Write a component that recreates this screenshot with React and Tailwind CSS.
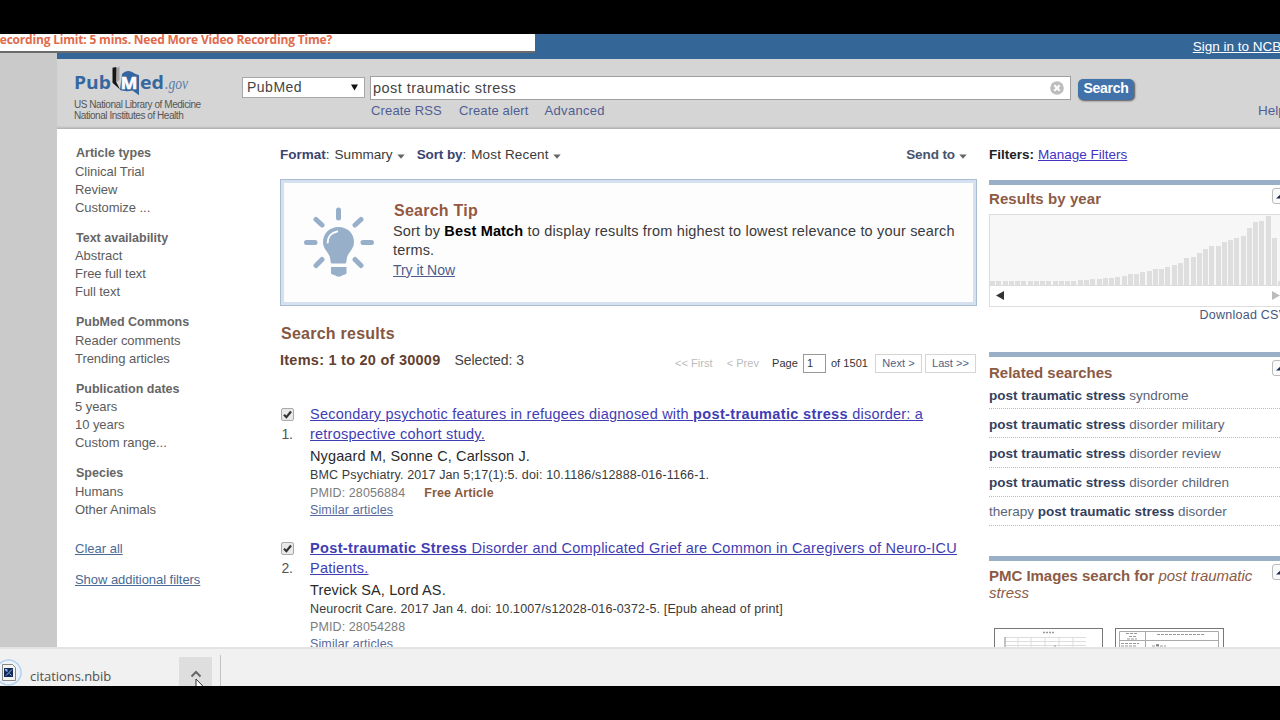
import React from "react";

const filterGroups = [
  { title: "Article types", items: ["Clinical Trial", "Review", "Customize ..."] },
  { title: "Text availability", items: ["Abstract", "Free full text", "Full text"] },
  { title: "PubMed Commons", items: ["Reader comments", "Trending articles"] },
  { title: "Publication dates", items: ["5 years", "10 years", "Custom range..."] },
  { title: "Species", items: ["Humans", "Other Animals"] },
];

const yearBars = [
  4, 4, 4, 4, 4, 4, 4, 4, 4, 4, 4, 4, 4, 4, 5, 5, 6, 6, 7, 7, 8, 9, 11, 11, 13, 14, 16, 16, 18, 20,
  22, 27, 28, 32, 36, 39, 39, 43, 45, 47, 49, 57, 63, 64, 69, 47, 4,
];

const related = [
  ["", "post traumatic stress", " syndrome"],
  ["", "post traumatic stress", " disorder military"],
  ["", "post traumatic stress", " disorder review"],
  ["", "post traumatic stress", " disorder children"],
  ["therapy ", "post traumatic stress", " disorder"],
];

function Caret() {
  return (
    <svg className="ml-1 mt-[3px] shrink-0" width="8" height="5" viewBox="0 0 8 5">
      <path d="M0.3 0.5h7.4L4 4.700z" fill="#666" />
    </svg>
  );
}

function Logo() {
  return (
    <svg width="130" height="36" viewBox="0 0 130 36" className="block">
      <path d="M42 2.500l3.500-2V14l-2.500 2z" fill="#a3a3a3" />
      <path d="M38.500 1.700l3.800-.7v15l3.700 7.500-7.500-6.800z" fill="#161616" />
      <path d="M48 8c4-4.500 9-3.500 12.500-.5l4.500 1.800v20l-6.500-4.700c-5 1.200-9 .6-12.500-.5z" fill="#35669f" />
      <g fontFamily="'Open Sans', 'Noto Sans', sans-serif" fontWeight="700" fill="#37679f">
        <text x="0" y="23" fontSize="18" textLength="37" lengthAdjust="spacingAndGlyphs">Pub</text>
        <text x="46.500" y="22.500" fontSize="16" stroke="#fff" strokeWidth="0.500" textLength="17" lengthAdjust="spacingAndGlyphs" fill="#fff">M</text>
        <text x="66" y="23" fontSize="18" textLength="24" lengthAdjust="spacingAndGlyphs">ed</text>
      </g>
      <text x="91" y="23" fontSize="17" fontStyle="italic" textLength="23" lengthAdjust="spacingAndGlyphs" fontFamily="'Liberation Serif', serif" fill="#5b7da8">.gov</text>
    </svg>
  );
}

function Bulb() {
  return (
    <svg width="72" height="72" viewBox="0 0 72 72" className="block">
      <g stroke="#98afca" strokeWidth="5" strokeLinecap="round">
        <path d="M35.500 4v8M13 13.500l6 5.500M58 13.500l-6 5.500M3.500 36.500h8.500M60 36.500h8.500M19 53.500l-6 6M52 53.500l6 6" />
      </g>
      <path d="M35.500 21c-9 0-15.500 6.500-15.500 15 0 6.500 4.500 9.500 6.500 14 1.200 2.800.6 7.500 2.200 7.500h13.600c1.600 0 1-4.700 2.200-7.500 2-4.500 6.500-7.500 6.500-14 0-8.500-6.500-15-15.500-15z" fill="#98afca" />
      <path d="M24.700 36.500c0-6 4-10 9.500-11" stroke="#fff" strokeWidth="2" fill="none" strokeLinecap="round" />
      <path d="M28 61h15.500v6c0 1.500-3 1.600-4.500 2.500-1 1.500-5.500 1.500-6.500 0-1.500-.9-4.500-1-4.500-2.500z" fill="#98afca" />
    </svg>
  );
}

function Check() {
  return (
    <svg width="13" height="13" viewBox="0 0 13 13" className="block">
      <rect x="0.500" y="0.500" width="12" height="12" rx="1.500" fill="#e9e9e9" stroke="#aaa" />
      <path d="M3 6.700l2.400 2.500L10 3.500" stroke="#333" strokeWidth="2.200" fill="none" />
    </svg>
  );
}

function Result({ n, children, authors, cite, pmid, free }) {
  return (
    <article className="flex h-[134px]">
      <div className="w-[29px] shrink-0 pt-[4px]">
        <Check />
        <div className="h-[20px] pl-[0.500px] pt-[3px] text-[14px] leading-[20px] tracking-[-0.300px] text-[#555]">{n}.</div>
      </div>
      <div className="min-w-0 whitespace-nowrap">
        <h3 className="text-[14.500px] leading-[20px] text-[#3f3db4]">{children}</h3>
        <p className="pt-[2px] text-[14.500px] leading-[20px] tracking-[0.130px] text-[#2a2a2a]">{authors}</p>
        <p className="text-[12.500px] leading-[18px] tracking-[0.140px] text-[#3a3a3a]">{cite}</p>
        <p className="flex text-[12.500px] leading-[18px] tracking-[0.1px] text-[#7c7c7c]">
          PMID: {pmid}
          {free && <b className="ml-[19px] text-[#8a5a3c]">Free Article</b>}
        </p>
        <p className="text-[12.500px] leading-[17px] tracking-[0.12px] text-[#5a6a9a]">
          <span className="underline">Similar articles</span>
        </p>
      </div>
    </article>
  );
}

function Toggle() {
  return (
    <span className="-mt-[1px] flex h-[16px] w-[20px] shrink-0 items-center justify-start rounded-[3px] border border-[#bbb] bg-[#fafafa] pl-[3px]">
      <svg width="12" height="6" viewBox="0 0 12 6"><path d="M0 5.500L6 0l6 5.500z" fill="#1d2c5c" /></svg>
    </span>
  );
}

function Panel({ title, titleClass, children }) {
  return (
    <section className="border-t-[5px] border-[#9ab0c9]">
      <div className="flex h-[25px] w-[303px] items-start justify-between pt-[4px]">
        <h3 className={titleClass + " text-[15px] font-bold leading-[20px] text-[#8c5b45]"}>{title}</h3>
        <Toggle />
      </div>
      {children}
    </section>
  );
}

export default function App() {
  return (
    <div className="flex h-[720px] w-[1280px] flex-col overflow-hidden bg-black py-[34px] font-['Liberation_Sans',Arial,sans-serif]">
      <div className="relative flex h-[613px] overflow-hidden bg-white">
        <div className="w-[57px] shrink-0 bg-[#cacaca]" />
        <div className="flex w-[1223px] shrink-0 flex-col">
          <div className="flex h-[25px] shrink-0 items-center justify-end overflow-hidden bg-[#356698] text-[13.500px] text-white">
            <a className="-mr-[5px] whitespace-nowrap pt-[1px] underline">Sign in to NCBI</a>
          </div>
          <header className="flex h-[70px] shrink-0 items-start overflow-hidden border-b border-[#b4b4b4] bg-[#d5d5d5] pl-[17px] shadow-[inset_0_-2px_2px_-1px_#bbb]">
            <div className="w-[168px] shrink-0 pt-[7px]">
              <Logo />
              <div className="-mt-[2px] whitespace-nowrap text-[10px] leading-[10.500px] text-[#555]">
                <p className="tracking-[-0.450px]">US National Library of Medicine</p>
                <p className="tracking-[-0.450px]">National Institutes of Health</p>
              </div>
            </div>
            <div className="mt-[18px] flex h-[21px] w-[123px] shrink-0 items-center justify-between border border-[#a8a8a8] bg-white pl-[4px] pr-[6px] text-[14px] tracking-[0.5px] text-[#444]">
              PubMed
              <svg width="7" height="7" viewBox="0 0 7 7"><path d="M0 0.500h7L3.500 6.500z" fill="#111" /></svg>
            </div>
            <div className="ml-[5px] w-[701px] shrink-0 pt-[17px]">
              <div className="flex h-[24px] items-center justify-between border border-[#a0a0a0] bg-white pl-[2px] pr-[6px] text-[14.500px] text-[#444]">
                <span className="pt-[1px] tracking-[0.450px]">post traumatic stress</span>
                <svg width="14" height="14" viewBox="0 0 14 14">
                  <circle cx="7" cy="7" r="6.800" fill="#bdbdbd" />
                  <path d="M4.300 4.300l5.400 5.400M9.700 4.300l-5.400 5.400" stroke="#fff" strokeWidth="2" />
                </svg>
              </div>
              <nav className="flex gap-[17px] pl-[1px] pt-[2px] text-[13px] leading-[18px] tracking-[0.150px] text-[#4f5f94]">
                <a>Create RSS</a>
                <a>Create alert</a>
                <a className="-ml-[1px] tracking-[0.3px]">Advanced</a>
              </nav>
            </div>
            <button className="ml-[7px] mt-[20px] h-[21px] w-[56px] shrink-0 rounded-[5px] bg-[#4272aa] pb-[2px] text-[14px] font-bold leading-[19px] tracking-[-0.3px] text-white shadow-[1px_1px_2px_#555]">
              Search
            </button>
            <a className="ml-[124px] mt-[43px] text-[13.500px] leading-[18px] text-[#4f5f94]">Help</a>
          </header>

          <div className="flex min-h-0 flex-1 overflow-hidden">
            <aside className="w-[224px] shrink-0 pl-[18px] pt-[15px] text-[13px] leading-[18px] text-[#5c5c5c]">
              {filterGroups.map((g) => (
                <div key={g.title} className="mb-[12px]">
                  <h4 className="h-[18.500px] pl-[1px] text-[12.500px] font-bold text-[#666]">{g.title}</h4>
                  {g.items.map((i) => (
                    <p key={i} className="tracking-[-0.050px]">{i}</p>
                  ))}
                </div>
              ))}
              <p className="pt-[9px] text-[#4a6a94] underline">Clear all</p>
              <p className="pt-[13px] tracking-[-0.050px] text-[#4a6a94] underline">Show additional filters</p>
            </aside>

            <main className="w-[695px] shrink-0 whitespace-nowrap pt-[16px]">
              <div className="-ml-[1px] flex h-[20px] w-[696px] items-center text-[13.500px] text-[#3a3a3a]">
                <b className="text-[#3b4470]">Format</b>
                <span className="pr-[5px]">:</span>
                <span className="tracking-[0.05px]">Summary</span>
                <Caret />
                <b className="ml-[12px] tracking-[-0.1px] text-[#3b4470]">Sort by</b>
                <span className="pr-[5px]">:</span>
                <span className="tracking-[0.150px]">Most Recent</span>
                <Caret />
                <b className="ml-auto tracking-[-0.1px] text-[#46546e]">Send to</b>
                <Caret />
                <span className="w-[9px]" />
              </div>

              <section className="mt-[14px] flex h-[127px] w-[697px] -ml-[1px] border border-[#a9bdd2] bg-[#fdfdfe] shadow-[inset_0_0_0_3px_#d5e1ee]">
                <div className="ml-[22px] mt-[26px] w-[90px] shrink-0">
                  <Bulb />
                </div>
                <div className="pt-[20px] text-[14.500px] leading-[19.300px] text-[#3a3a3a]">
                  <h2 className="pl-[1px] text-[16px] font-bold leading-[22px] tracking-[0.250px] text-[#94583f]">Search Tip</h2>
                  <p className="tracking-[0.170px]">
                    Sort by <b className="text-black">Best Match</b> to display results from highest to lowest relevance to your search
                    <br />
                    terms.
                  </p>
                  <a className="text-[14px] tracking-[-0.050px] text-[#4c5c8c] underline">Try it Now</a>
                </div>
              </section>

              <h2 className="mt-[16px] text-[16px] font-bold leading-[24px] tracking-[0.250px] text-[#85573f]">Search results</h2>
              <div className="-ml-[1px] flex h-[20px] w-[696px] items-center pt-[8px]">
                <b className="pt-[1px] text-[14.500px] tracking-[0.250px] text-[#633f31]">Items: 1 to 20 of 30009</b>
                <span className="ml-[14px] pt-[1px] text-[14px] tracking-[-0.050px] text-[#444]">Selected: 3</span>
                <div className="ml-auto flex items-center pt-[6px] text-[11px] tracking-[0.05px] text-[#333]">
                  <span className="text-[#bbb]">&lt;&lt; First</span>
                  <span className="ml-[14px] text-[#bbb]">&lt; Prev</span>
                  <span className="ml-[13px]">Page</span>
                  <span className="ml-[5px] flex h-[19px] w-[23px] items-center border border-[#999] pl-[3px]">1</span>
                  <span className="ml-[5px]">of 1501</span>
                  <a className="ml-[7px] flex h-[19px] w-[47px] items-center justify-center border border-[#d5d5d5] text-[#505f85]">Next &gt;</a>
                  <a className="ml-[3px] flex h-[19px] w-[51px] items-center justify-center border border-[#d5d5d5] text-[#505f85]">Last &gt;&gt;</a>
                </div>
              </div>

              <div className="pt-[38px]">
                <Result n={1} authors="Nygaard M, Sonne C, Carlsson J." cite="BMC Psychiatry. 2017 Jan 5;17(1):5. doi: 10.1186/s12888-016-1166-1." pmid="28056884" free>
                  <span className="tracking-[0.220px] underline">
                    Secondary psychotic features in refugees diagnosed with <b className="tracking-[0.350px]">post-traumatic stress</b> disorder: a<br />
                    retrospective cohort study.
                  </span>
                </Result>
                <Result n={2} authors="Trevick SA, Lord AS." cite="Neurocrit Care. 2017 Jan 4. doi: 10.1007/s12028-016-0372-5. [Epub ahead of print]" pmid="28054288">
                  <span className="tracking-[0.230px] underline">
                    <b className="tracking-[0.350px]">Post-traumatic Stress</b> Disorder and Complicated Grief are Common in Caregivers of Neuro-ICU<br />
                    Patients.
                  </span>
                </Result>
              </div>
            </main>

            <aside className="ml-[13px] w-[291px] shrink-0 overflow-hidden whitespace-nowrap pt-[16px]">
              <div className="flex h-[20px] items-center text-[13.500px] text-[#222]">
                <b>Filters:</b>
                <a className="ml-[4px] text-[#4432c4] underline">Manage Filters</a>
              </div>
              <div className="h-[14.500px]" />
              <Panel title="Results by year" titleClass="tracking-[0.080px]">
                <div className="mt-[4px] h-[93px] w-[310px] border border-[#ddd]">
                  <div className="flex h-[71px] items-end gap-[1.280px] border-b border-[#ddd] bg-[#f7f7f7]">
                    {yearBars.map((h, i) => (
                      <span key={i} className="w-[5px] shrink-0 bg-[#dedede]" style={{ height: h }} />
                    ))}
                  </div>
                  <div className="flex h-[20px] items-center gap-[268px] pl-[6px]">
                    <svg width="8" height="9" viewBox="0 0 8 9"><path d="M8 0v9L0 4.500z" fill="#333" /></svg>
                    <svg width="8" height="9" viewBox="0 0 8 9"><path d="M0 0v9l8-4.500z" fill="#bbb" /></svg>
                  </div>
                </div>
                <p className="pl-[210.500px] text-[12.500px] leading-[16px] tracking-[0.250px] text-[#46587c]">Download CSV</p>
              </Panel>
              <div className="h-[29.500px]" />
              <Panel title="Related searches" titleClass="pt-[2px]">
                {related.map(([a, b, c], i) => (
                  <p key={i} className={(i ? "h-[29.200px] pt-[5.500px]" : "h-[27.300px] pt-[3.500px]") + " border-b border-dotted border-[#bbb] text-[13.500px] leading-[19px] text-[#5a6478]"}>
                    {a}<b className="text-[#33415e]">{b}</b>{c}
                  </p>
                ))}
              </Panel>
              <div className="h-[30px]" />
              <Panel title={<>PMC Images search for <i className="font-normal">post traumatic</i></>} titleClass="pt-[1px] tracking-[-0.030px]">
                <p className="-mt-[2px] text-[15px] italic leading-[18px] text-[#8c5b45]">stress</p>
                <div className="flex gap-[12px] pl-[5px] pt-[25.500px]">
                  <svg width="109" height="30" viewBox="0 0 109 30">
                    <rect x="0.500" y="0.500" width="108" height="60" fill="#fff" stroke="#777" />
                    <path d="M49 4.500h12" stroke="#999" strokeWidth="1.500" strokeDasharray="2 1" />
                    <path d="M11 9.500h81M11 13.500h81M11 17.500h81M11 9v20M24 9v20M37 9v20M51 9v20M65 9v20M79 9v20" stroke="#ddd" fill="none" />
                    <path d="M61 17v3M11 9v11" stroke="#999" />
                  </svg>
                  <svg width="109" height="30" viewBox="0 0 109 30">
                    <rect x="0.500" y="0.500" width="108" height="60" fill="#fff" stroke="#777" />
                    <path d="M4.500 30V3.500h99V30M30.500 3v27M4 12.500h100" stroke="#aaa" fill="none" />
                    <path d="M42 6.500h48M11 5.500h12M14 8.500h7M12 11h10M6 15.500h18M6 18h15M37 18h14" stroke="#999" strokeDasharray="3 1" />
                    <path d="M41 17h3" stroke="#333" />
                  </svg>
                </div>
              </Panel>
            </aside>
          </div>
        </div>

        <div className="absolute left-0 top-0 h-[19px] w-[535px] overflow-hidden border-b-2 border-[#6b6b6b] bg-white">
          <p className="-ml-[8px] -mt-[3px] whitespace-nowrap font-['Open_Sans','Noto_Sans',sans-serif] text-[12px] font-bold leading-[18px] tracking-[-0.190px] text-[#df6b4c]">
            Recording Limit: 5 mins. Need More Video Recording Time?
          </p>
        </div>
      </div>

      <footer className="relative flex h-[39px] shrink-0 items-end overflow-hidden border-t-2 border-[#e3e3e3] bg-[#f1f1f1]">
        <svg width="23" height="37" viewBox="0 0 23 37" className="shrink-0">
          <circle cx="8.500" cy="23.500" r="12.500" fill="#edf3fa" stroke="#b4d0ee" strokeWidth="1.500" />
          <path d="M2.500 15.500h10l3 3v13H2.500z" fill="#f4f4f0" stroke="#888" />
          <rect x="4" y="19" width="9" height="9" fill="#16295c" />
          <path d="M5 20.500h2v2zM12 20.500l-6 6M9.500 24.500l2 2" stroke="#8fc4e8" fill="#8fc4e8" />
        </svg>
        <span className="ml-[7px] h-[26px] w-[149px] font-['Open_Sans','Noto_Sans',sans-serif] text-[13px] leading-[32px] tracking-[-0.050px] text-[#505050]">citations.nbib</span>
        <span className="flex h-[29px] w-[33px] justify-center bg-[#dedede] pt-[13px]">
          <svg width="12" height="8" viewBox="0 0 12 8"><path d="M1.500 6.500L6 2l4.500 4.500" stroke="#666" strokeWidth="2" fill="none" /></svg>
        </span>
        <span className="ml-[8px] h-[31px] w-px bg-[#c4c4c4]" />
        <svg width="12" height="18" viewBox="0 0 12 18" className="absolute left-[195px] top-[29px]">
          <path d="M1 1v15l3.500-3.300L7 18l2.500-1-2.400-5.200H11.500z" fill="#fff" stroke="#333" />
        </svg>
      </footer>
    </div>
  );
}
